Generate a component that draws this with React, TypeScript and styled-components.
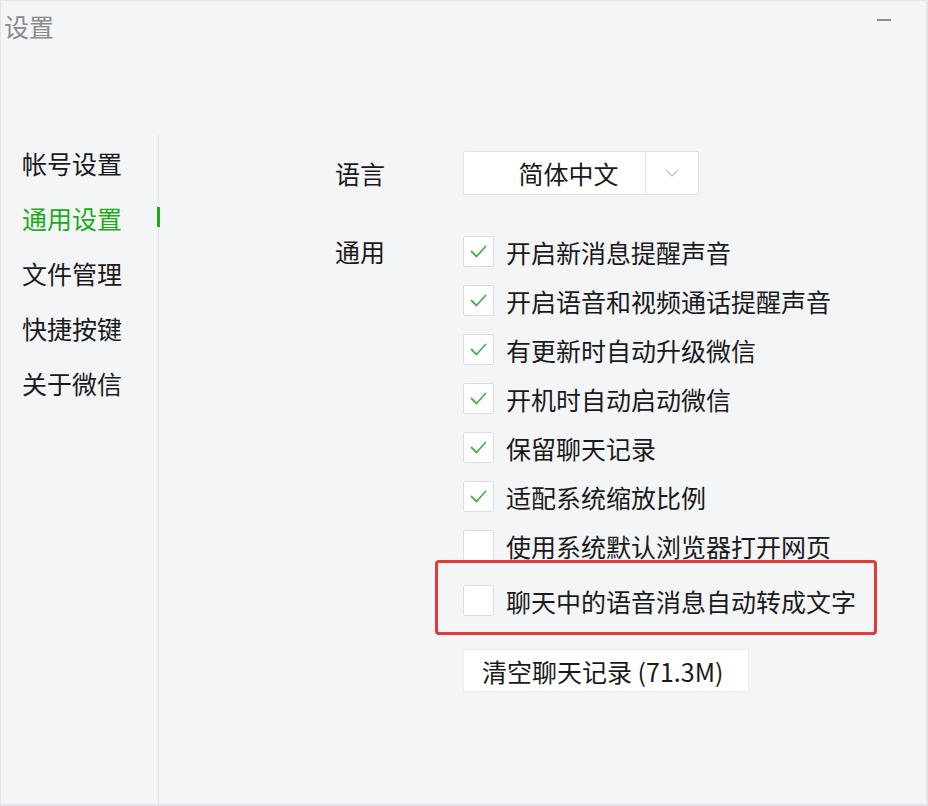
import React from 'react';
import styled, { createGlobalStyle } from 'styled-components';

const GlobalStyle = createGlobalStyle`
  html, body {
    margin: 0;
    padding: 0;
    background: #f4f5f7;
  }
  *, *::before, *::after {
    box-sizing: border-box;
  }
`;

const Window = styled.div`
  width: 928px;
  height: 806px;
  display: flex;
  flex-direction: column;
  background: #f4f5f7;
  border: 1px solid #e4e5e8;
  border-bottom-width: 2px;
  border-right-width: 2px;
  font-family: 'Noto Sans CJK SC', 'Noto Sans', sans-serif;
  color: #1a1a1a;
  overflow: hidden;
`;

const TitleBar = styled.div`
  height: 134px;
  display: flex;
  justify-content: space-between;
  align-items: flex-start;
`;

const Title = styled.div`
  padding: 10px 0 0 3px;
  font-size: 25px;
  line-height: 30px;
  color: #8a8a8a;
`;

const Minimize = styled.div`
  width: 14px;
  height: 2px;
  margin: 18px 35px 0 0;
  background: #8c8c8c;
`;

const Body = styled.div`
  flex: 1;
  display: flex;
`;

const Sidebar = styled.nav`
  width: 158px;
  border-right: 1px solid #e2e3e6;
  display: flex;
  flex-direction: column;
`;

const NavItem = styled.div<{ $active?: boolean }>`
  position: relative;
  height: 55px;
  padding-left: 21px;
  display: flex;
  align-items: center;
  font-size: 25px;
  color: ${(p) => (p.$active ? '#1aad19' : '#1a1a1a')};

  &::after {
    content: '';
    display: ${(p) => (p.$active ? 'block' : 'none')};
    position: absolute;
    right: -2px;
    top: 17px;
    width: 3px;
    height: 20px;
    background: #1aad19;
  }
`;

const Content = styled.main`
  flex: 1;
  padding: 16px 0 0 176px;
  display: grid;
  grid-template-columns: 128px 1fr;
  align-content: start;
`;

const Label = styled.div<{ $rowHeight: number }>`
  font-size: 25px;
  line-height: ${(p) => p.$rowHeight}px;
`;

const Select = styled.div`
  width: 236px;
  height: 44px;
  display: flex;
  background: #fff;
  border: 1px solid #e1e2e5;
  border-radius: 2px;
`;

const SelectValue = styled.div`
  width: 182px;
  padding-left: 28px;
  display: flex;
  align-items: center;
  justify-content: center;
  font-size: 25px;
  border-right: 1px solid #e1e2e5;
`;

const SelectArrow = styled.div`
  flex: 1;
  display: flex;
  align-items: center;
  justify-content: center;
`;

const Options = styled.div`
  margin-top: 32px;
  display: flex;
  flex-direction: column;
  align-items: flex-start;
`;

const OptionRow = styled.label<{ $highlighted?: boolean }>`
  position: relative;
  height: 49px;
  display: flex;
  align-items: center;
  gap: 12px;
  font-size: 25px;
  margin-top: ${(p) => (p.$highlighted ? '6px' : '0')};

  &::before {
    content: '';
    display: ${(p) => (p.$highlighted ? 'block' : 'none')};
    position: absolute;
    left: -28px;
    top: -16px;
    width: 442px;
    height: 75px;
    border: 3px solid #e23a3a;
    border-radius: 4px;
  }
`;

const Box = styled.span`
  width: 31px;
  height: 31px;
  flex: none;
  display: flex;
  align-items: center;
  justify-content: center;
  background: #fff;
  border: 1px solid #dcdde0;
  border-radius: 2px;
`;

const ClearButton = styled.button`
  margin-top: 24px;
  width: 286px;
  height: 43px;
  padding: 0 18px;
  background: #fff;
  border: 1px solid #ececef;
  font-family: inherit;
  font-size: 25px;
  color: #1a1a1a;
  text-align: left;
  white-space: nowrap;
`;

const Check = () => (
  <svg width="17" height="13" viewBox="0 0 17 13">
    <path d="M1.5 6.5 L6.5 11.5 L15.5 1.5" fill="none" stroke="#4caf50" strokeWidth="1.8" strokeLinecap="round" strokeLinejoin="round" />
  </svg>
);

const Chevron = () => (
  <svg width="14" height="8" viewBox="0 0 14 8">
    <path d="M1 1 L7 7 L13 1" fill="none" stroke="#bdbdbd" strokeWidth="1.2" />
  </svg>
);

const navItems = ['帐号设置', '通用设置', '文件管理', '快捷按键', '关于微信'];

const options: { text: string; checked: boolean; highlighted?: boolean }[] = [
  { text: '开启新消息提醒声音', checked: true },
  { text: '开启语音和视频通话提醒声音', checked: true },
  { text: '有更新时自动升级微信', checked: true },
  { text: '开机时自动启动微信', checked: true },
  { text: '保留聊天记录', checked: true },
  { text: '适配系统缩放比例', checked: true },
  { text: '使用系统默认浏览器打开网页', checked: false },
  { text: '聊天中的语音消息自动转成文字', checked: false, highlighted: true },
];

export default function App() {
  return (
    <>
      <GlobalStyle />
      <Window>
        <TitleBar>
          <Title>设置</Title>
          <Minimize />
        </TitleBar>
        <Body>
          <Sidebar>
            {navItems.map((item, i) => (
              <NavItem key={item} $active={i === 1}>
                {item}
              </NavItem>
            ))}
          </Sidebar>
          <Content>
            <Label $rowHeight={44}>语言</Label>
            <Select>
              <SelectValue>简体中文</SelectValue>
              <SelectArrow>
                <Chevron />
              </SelectArrow>
            </Select>
            <Label $rowHeight={49} style={{ marginTop: 32 }}>
              通用
            </Label>
            <Options>
              {options.map((o) => (
                <OptionRow key={o.text} $highlighted={o.highlighted}>
                  <Box>{o.checked && <Check />}</Box>
                  {o.text}
                </OptionRow>
              ))}
              <ClearButton>清空聊天记录 (71.3M)</ClearButton>
            </Options>
          </Content>
        </Body>
      </Window>
    </>
  );
}
